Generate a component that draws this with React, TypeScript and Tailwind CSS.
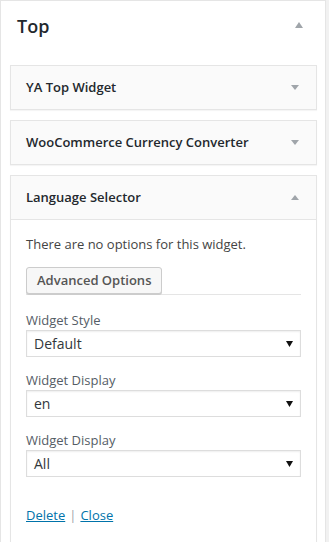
import React from 'react';

const Triangle: React.FC<{ up?: boolean; className?: string }> = ({ up, className }) => (
  <svg width="8" height="5" viewBox="0 0 8 5" className={className}>
    {up ? <path d="M0 5 L4 0 L8 5 Z" fill="#a0a5aa" /> : <path d="M0 0 L8 0 L4 5 Z" fill="#a0a5aa" />}
  </svg>
);

const CollapsedWidget: React.FC<{ title: string }> = ({ title }) => (
  <div className="border border-[#e5e5e5] bg-[#fafafa] shadow-[0_1px_1px_rgba(0,0,0,0.04)]">
    <div className="h-[43px] flex items-center justify-between pl-[15px] pr-[17px]">
      <h3 className="text-[13px] font-semibold text-[#23282d]">{title}</h3>
      <Triangle />
    </div>
  </div>
);

const FakeSelect: React.FC<{ value: string }> = ({ value }) => (
  <div className="h-[27px] border border-[#ddd] bg-white shadow-[inset_0_1px_2px_rgba(0,0,0,0.07)] flex items-center justify-between pl-[7px] pr-[7px]">
    <span className="text-[14px] text-[#32373c]">{value}</span>
    <svg width="7" height="6" viewBox="0 0 7 6">
      <path d="M0 0 L7 0 L3.5 6 Z" fill="#111" />
    </svg>
  </div>
);

const Field: React.FC<{ label: string; value: string }> = ({ label, value }) => (
  <div>
    <label className="block text-[13px] leading-[18px] text-[#555d66] mb-[1px]">{label}</label>
    <FakeSelect value={value} />
  </div>
);

export default function App() {
  return (
    <div className="min-h-screen bg-[#f1f1f1] font-['Open_Sans',sans-serif]">
      <div className="w-[326px] min-h-[542px] bg-white border border-[#e5e5e5] pl-[9px] pr-[8px]">
        {/* Sidebar header */}
        <div className="h-[64px] flex items-start justify-between pl-[7px] pr-[14px] pt-[13px]">
          <h2 className="text-[18px] leading-[24px] font-semibold text-[#23282d]">Top</h2>
          <svg width="8" height="6" viewBox="0 0 8 6" className="mt-[8px]">
            <path d="M0 6 L4 0 L8 6 Z" fill="#a0a5aa" />
          </svg>
        </div>

        <div className="flex flex-col gap-[10px]">
          <CollapsedWidget title="YA Top Widget" />
          <CollapsedWidget title="WooCommerce Currency Converter" />

          {/* Expanded widget */}
          <div className="border border-[#e5e5e5] bg-white shadow-[0_1px_1px_rgba(0,0,0,0.04)]">
            <div className="h-[44px] flex items-center justify-between pl-[15px] pr-[17px] bg-[#fafafa] border-b border-[#e5e5e5]">
              <h3 className="text-[13px] font-semibold text-[#23282d]">Language Selector</h3>
              <Triangle up />
            </div>
            <div className="px-[15px] pt-[14px] pb-[18px]">
              <p className="text-[13px] leading-[20px] text-[#444]">There are no options for this widget.</p>
              <div className="mt-[13px] border-b border-[#e5e5e5]">
                <button className="h-[27px] px-[10px] text-[13px] font-semibold text-[#555] bg-[#f7f7f7] border border-[#ccc] rounded-[3px] shadow-[0_1px_0_#ccc]">
                  Advanced Options
                </button>
              </div>
              <div className="mt-[16px] flex flex-col gap-[14px]">
                <Field label="Widget Style" value="Default" />
                <Field label="Widget Display" value="en" />
                <Field label="Widget Display" value="All" />
              </div>
              <div className="mt-[28px] text-[13px] leading-[20px]">
                <a href="#" className="text-[#0073aa] underline">Delete</a>
                <span className="text-[#a0a5aa] mx-[4px]">|</span>
                <a href="#" className="text-[#0073aa] underline">Close</a>
              </div>
            </div>
          </div>
        </div>
      </div>
    </div>
  );
}
